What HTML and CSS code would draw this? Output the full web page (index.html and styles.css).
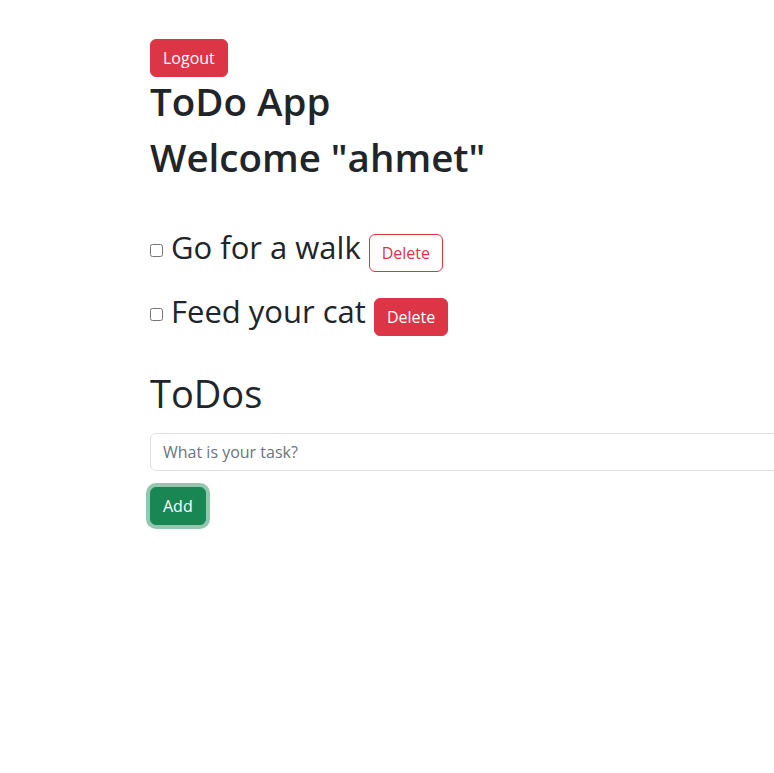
FILE: index.html
```html
<!DOCTYPE html>
<html lang="en">
<head>
<meta charset="utf-8">
<title>ToDo App</title>
<link rel="stylesheet" href="styles.css">
</head>
<body>
<div class="app">
  <div class="container">
    <div class="top-bar">
      <button class="btn btn-danger" type="button">Logout</button>
    </div>
    <h1 class="title">ToDo App</h1>
    <h1 class="title">Welcome "ahmet"</h1>
    <ul class="todo-list">
      <li class="todo-item">
        <input class="todo-check" type="checkbox">
        <span class="todo-text">Go for a walk</span>
        <button class="btn btn-outline-danger" type="button">Delete</button>
      </li>
      <li class="todo-item">
        <input class="todo-check" type="checkbox">
        <span class="todo-text">Feed your cat</span>
        <button class="btn btn-danger" type="button">Delete</button>
      </li>
    </ul>
    <h2 class="section-title">ToDos</h2>
    <form class="add-form">
      <input class="form-control" type="text" placeholder="What is your task?">
      <div>
        <button class="btn btn-success is-focused" type="button">Add</button>
      </div>
    </form>
  </div>
</div>
</body>
</html>
```
FILE: styles.css
```css
* { box-sizing: border-box; }
html, body { margin: 0; padding: 0; background: #fff; }
body {
  font-family: "Open Sans", sans-serif;
  font-size: 16px;
  line-height: 1.5;
  color: #212529;
}
.app { overflow: hidden; width: 100%; min-height: 773px; }
.container { padding: 39px 0 0 150px; }
.top-bar { height: 38px; }
.btn {
  display: inline-block;
  font-family: "Open Sans", sans-serif;
  font-size: 16px;
  font-weight: 400;
  line-height: 24px;
  padding: 6px 12px;
  border: 1px solid transparent;
  border-radius: 6px;
  cursor: pointer;
  background: transparent;
  height: 38px;
}
.btn-danger { background: #dc3545; border-color: #dc3545; color: #fff; }
.btn-outline-danger { background: #fff; border-color: #dc3545; color: #dc3545; }
.btn-success { background: #198754; border-color: #198754; color: #fff; }
.btn-success.is-focused {
  background: #198754;
  border-color: #198754;
  box-shadow: 0 0 0 4px rgba(60, 153, 110, 0.55);
}
.title {
  margin: 0 0 8px;
  font-size: 38.5px;
  font-weight: 600;
  line-height: 48px;
}
.todo-list { list-style: none; margin: 47px 0 0; padding: 0; }
.todo-item {
  display: flex;
  align-items: baseline;
  height: 44px;
  margin-bottom: 20px;
}
.todo-check {
  align-self: flex-start;
  width: 13px;
  height: 13px;
  margin: 16px 8px 0 0;
}
.todo-text {
  font-size: 31px;
  line-height: 38px;
  margin-right: 8px;
}
.section-title {
  margin: 34px 0 17px;
  font-size: 38px;
  font-weight: 400;
  line-height: 46px;
}
.add-form { margin: 0; }
.form-control {
  display: block;
  width: 720px;
  height: 38px;
  padding: 6px 12px;
  font-family: "Open Sans", sans-serif;
  font-size: 16px;
  line-height: 24px;
  color: #212529;
  background: #fff;
  border: 1px solid #dee2e6;
  border-radius: 6px;
  margin: 0 0 16px;
}
.form-control::placeholder { color: #6c757d; opacity: 1; }
```
